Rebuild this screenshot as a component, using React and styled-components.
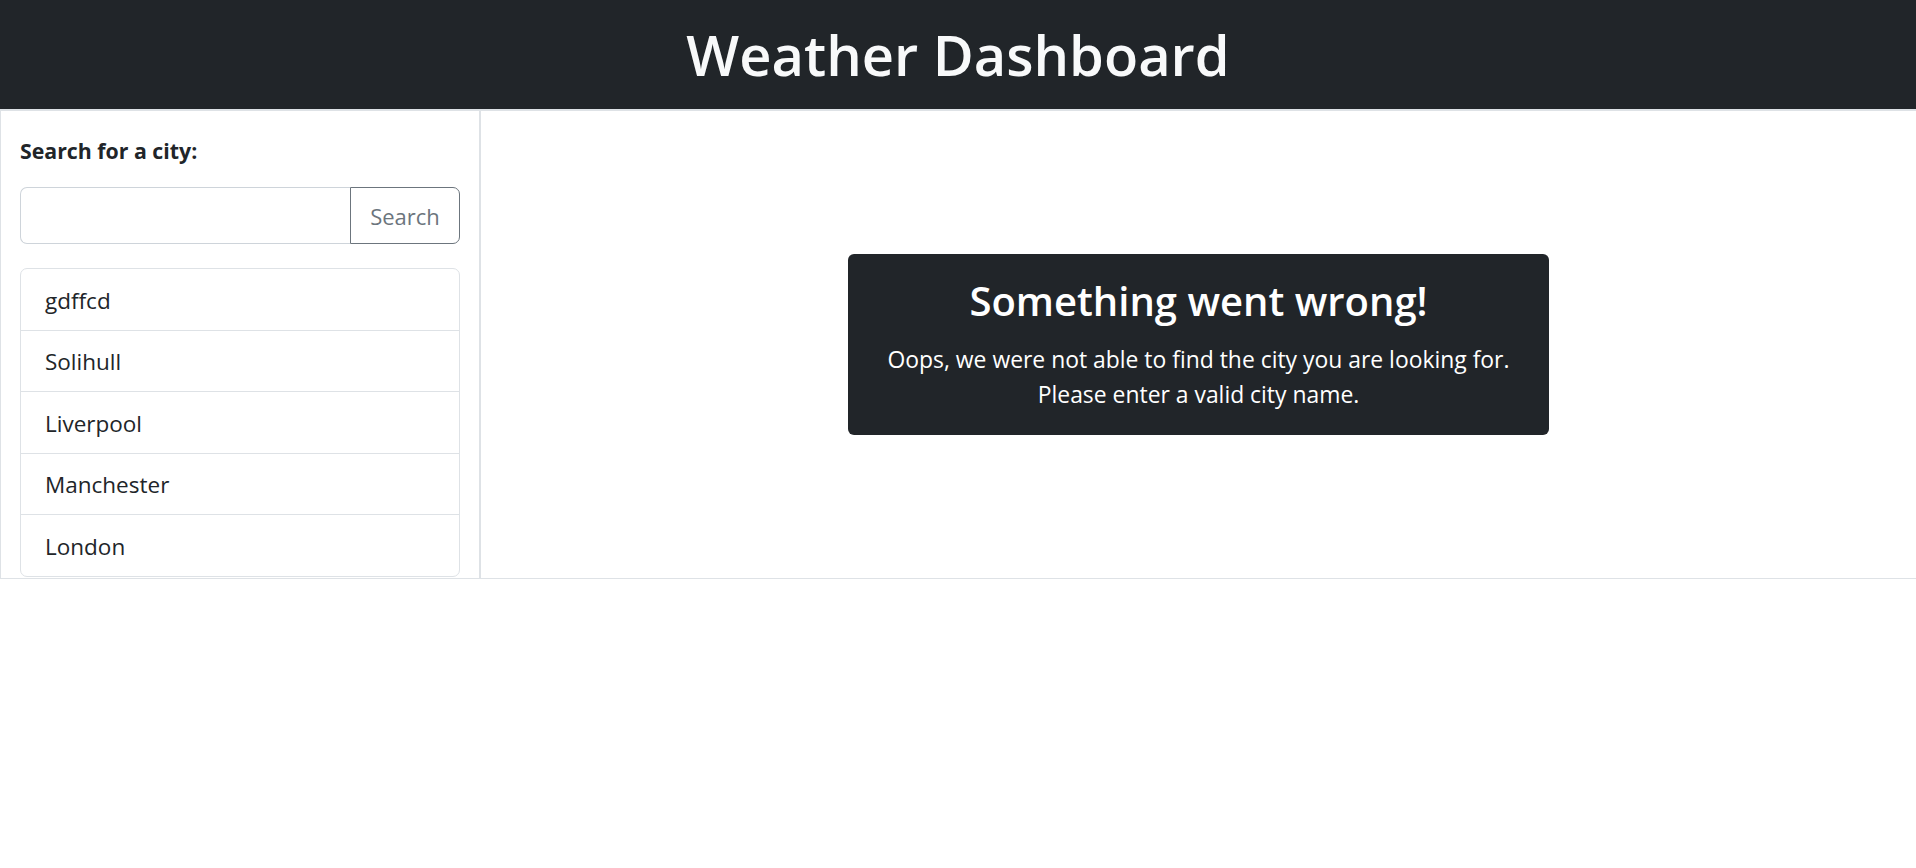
import React from "react";
import styled, { createGlobalStyle } from "styled-components";

const GlobalStyle = createGlobalStyle`
  * { box-sizing: border-box; }
  html, body { margin: 0; padding: 0; background: #fff; }
  body {
    font-family: "Open Sans", "Noto Sans", "Liberation Sans", sans-serif;
    color: #212529;
  }
`;

const Header = styled.header`
  height: 109px;
  background: #212529;
  display: flex;
  align-items: center;
  justify-content: center;
`;

const Title = styled.h1`
  margin: 0;
  color: #f8f9fa;
  font-size: 56px;
  font-weight: 600;
  line-height: 1.2;
`;

const Row = styled.div`
  display: flex;
  border-top: 2px solid #dee2e6;
  border-bottom: 1px solid #dee2e6;
`;

const Sidebar = styled.aside`
  width: 481px;
  flex: none;
  border-left: 1px solid #dee2e6;
  border-right: 2px solid #dee2e6;
  padding: 26px 19px 1px 19px;
`;

const Label = styled.h5`
  margin: 0 0 23px 0;
  font-size: 21.3px;
  font-weight: 700;
  line-height: 27px;
  color: #212529;
`;

const InputGroup = styled.div`
  display: flex;
  height: 57px;
  margin-bottom: 24px;
`;

const Input = styled.input`
  flex: 1;
  min-width: 0;
  border: 1px solid #ced4da;
  border-right: none;
  border-radius: 7px 0 0 7px;
  font: inherit;
  font-size: 22px;
  padding: 0 20px;
  outline: none;
`;

const Button = styled.button`
  width: 110px;
  border: 1px solid #6c757d;
  border-radius: 0 7px 7px 0;
  background: transparent;
  color: #6c757d;
  font-family: inherit;
  font-size: 22px;
  padding: 0;
  cursor: pointer;
`;

const List = styled.ul`
  list-style: none;
  margin: 0;
  padding: 0;
  border: 1px solid #dee2e6;
  border-radius: 7px;
  overflow: hidden;
`;

const Item = styled.li`
  padding: 13.5px 24px 11.1px 24px;
  font-size: 22.5px;
  line-height: 36px;
  color: #212529;
  border-top: ${(p) => (p.$first ? "none" : "1px solid #dee2e6")};
`;

const Main = styled.main`
  flex: 1;
  display: flex;
  align-items: center;
  justify-content: center;
`;

const ErrorCard = styled.div`
  width: 701px;
  height: 181px;
  background: #212529;
  border-radius: 6px;
  color: #fff;
  text-align: center;
  padding: 23.5px 20px 0 20px;
`;

const ErrorTitle = styled.h2`
  margin: 0 0 17px 0;
  font-size: 40px;
  font-weight: 600;
  line-height: 48px;
`;

const ErrorText = styled.p`
  margin: 0;
  font-size: 22.9px;
  line-height: 35px;
`;

const cities = ["gdffcd", "Solihull", "Liverpool", "Manchester", "London"];

export default function App() {
  return (
    <>
      <GlobalStyle />
      <Header>
        <Title>Weather Dashboard</Title>
      </Header>
      <Row>
        <Sidebar>
          <Label>Search for a city:</Label>
          <InputGroup>
            <Input type="text" aria-label="City" />
            <Button type="button">Search</Button>
          </InputGroup>
          <List>
            {cities.map((c, i) => (
              <Item key={c} $first={i === 0}>
                {c}
              </Item>
            ))}
          </List>
        </Sidebar>
        <Main>
          <ErrorCard>
            <ErrorTitle>Something went wrong!</ErrorTitle>
            <ErrorText>
              Oops, we were not able to find the city you are looking for.
              <br />
              Please enter a valid city name.
            </ErrorText>
          </ErrorCard>
        </Main>
      </Row>
    </>
  );
}
